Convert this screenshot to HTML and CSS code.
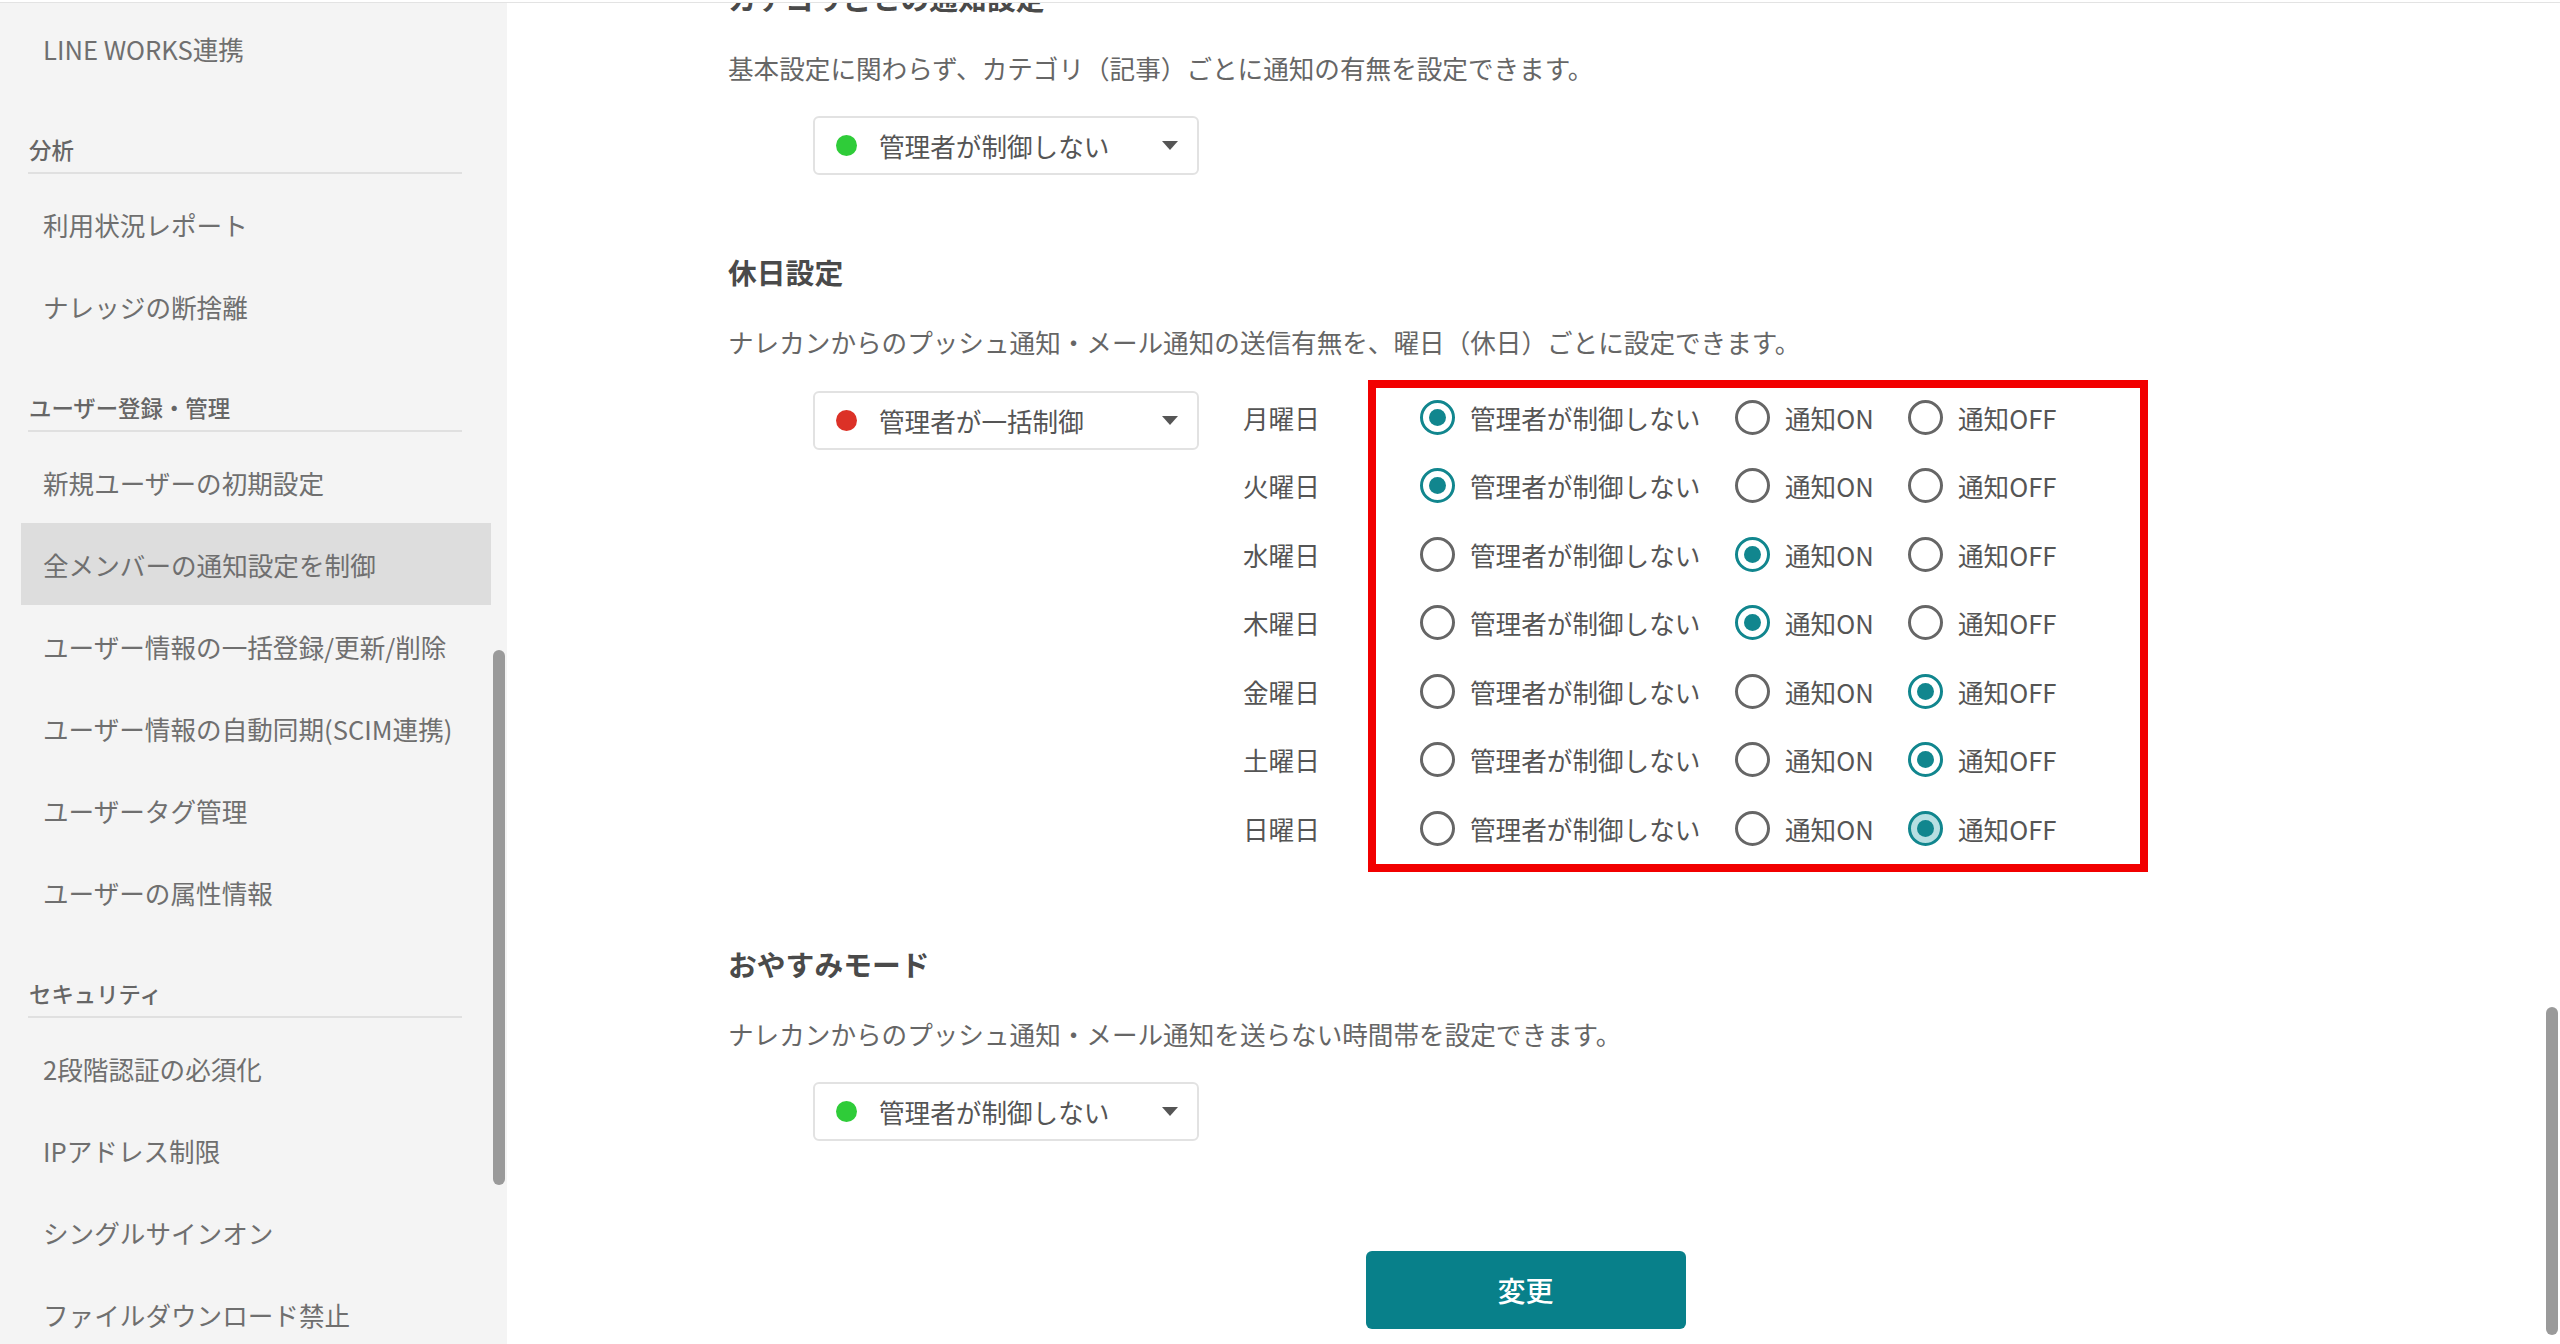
FILE: index.html
```html
<!DOCTYPE html>
<html lang="ja">
<head>
<meta charset="utf-8">
<title>通知設定</title>
<link rel="stylesheet" href="styles.css">
</head>
<body>
<div class="topbar"></div>
<div class="app">
  <aside class="sidebar">
    <div class="nav-item">LINE WORKS連携</div>
    <div class="nav-head">分析</div>
    <div class="nav-item">利用状況レポート</div>
    <div class="nav-item">ナレッジの断捨離</div>
    <div class="nav-head">ユーザー登録・管理</div>
    <div class="nav-item">新規ユーザーの初期設定</div>
    <div class="nav-item active">全メンバーの通知設定を制御</div>
    <div class="nav-item">ユーザー情報の一括登録/更新/削除</div>
    <div class="nav-item">ユーザー情報の自動同期(SCIM連携)</div>
    <div class="nav-item">ユーザータグ管理</div>
    <div class="nav-item">ユーザーの属性情報</div>
    <div class="nav-head">セキュリティ</div>
    <div class="nav-item">2段階認証の必須化</div>
    <div class="nav-item">IPアドレス制限</div>
    <div class="nav-item">シングルサインオン</div>
    <div class="nav-item">ファイルダウンロード禁止</div>
    <div class="side-thumb"></div>
  </aside>
  <main class="main">
    <div class="content">
      <section class="sec sec-first">
        <h2 class="sec-title">カテゴリごとの通知設定</h2>
        <p class="sec-desc">基本設定に関わらず、カテゴリ（記事）ごとに通知の有無を設定できます。</p>
        <div class="select select-solo"><span class="dot green"></span><span class="select-text">管理者が制御しない</span><span class="caret"></span></div>
      </section>

      <section class="sec sec-holiday">
        <h2 class="sec-title">休日設定</h2>
        <p class="sec-desc">ナレカンからのプッシュ通知・メール通知の送信有無を、曜日（休日）ごとに設定できます。</p>
        <div class="holiday-row">
          <div class="select select-inrow"><span class="dot red"></span><span class="select-text">管理者が一括制御</span><span class="caret"></span></div>
          <div class="days">
            <div class="day-labels">
              <div class="day-label">月曜日</div>
              <div class="day-label">火曜日</div>
              <div class="day-label">水曜日</div>
              <div class="day-label">木曜日</div>
              <div class="day-label">金曜日</div>
              <div class="day-label">土曜日</div>
              <div class="day-label">日曜日</div>
            </div>
            <div class="day-options">
              <div class="opt-row">
                <label class="opt opt-a"><span class="radio on"></span>管理者が制御しない</label>
                <label class="opt opt-b"><span class="radio"></span>通知ON</label>
                <label class="opt"><span class="radio"></span>通知OFF</label>
              </div>
              <div class="opt-row">
                <label class="opt opt-a"><span class="radio on"></span>管理者が制御しない</label>
                <label class="opt opt-b"><span class="radio"></span>通知ON</label>
                <label class="opt"><span class="radio"></span>通知OFF</label>
              </div>
              <div class="opt-row">
                <label class="opt opt-a"><span class="radio"></span>管理者が制御しない</label>
                <label class="opt opt-b"><span class="radio on"></span>通知ON</label>
                <label class="opt"><span class="radio"></span>通知OFF</label>
              </div>
              <div class="opt-row">
                <label class="opt opt-a"><span class="radio"></span>管理者が制御しない</label>
                <label class="opt opt-b"><span class="radio on"></span>通知ON</label>
                <label class="opt"><span class="radio"></span>通知OFF</label>
              </div>
              <div class="opt-row">
                <label class="opt opt-a"><span class="radio"></span>管理者が制御しない</label>
                <label class="opt opt-b"><span class="radio"></span>通知ON</label>
                <label class="opt"><span class="radio on"></span>通知OFF</label>
              </div>
              <div class="opt-row">
                <label class="opt opt-a"><span class="radio"></span>管理者が制御しない</label>
                <label class="opt opt-b"><span class="radio"></span>通知ON</label>
                <label class="opt"><span class="radio on"></span>通知OFF</label>
              </div>
              <div class="opt-row">
                <label class="opt opt-a"><span class="radio"></span>管理者が制御しない</label>
                <label class="opt opt-b"><span class="radio"></span>通知ON</label>
                <label class="opt"><span class="radio on focus"></span>通知OFF</label>
              </div>
            </div>
          </div>
        </div>
      </section>

      <section class="sec sec-sleep">
        <h2 class="sec-title">おやすみモード</h2>
        <p class="sec-desc">ナレカンからのプッシュ通知・メール通知を送らない時間帯を設定できます。</p>
        <div class="select select-solo"><span class="dot green"></span><span class="select-text">管理者が制御しない</span><span class="caret"></span></div>
      </section>

      <div class="actions"><button class="btn-primary">変更</button></div>
    </div>
    <div class="main-thumb"></div>
  </main>
</div>
</body>
</html>
```

FILE: styles.css
```css
*, *::before, *::after { box-sizing: border-box; }
html, body {
  margin: 0;
  padding: 0;
  width: 2560px;
  height: 1344px;
  overflow: hidden;
  background: #fff;
  font-family: "Noto Sans CJK JP", "Noto Sans", sans-serif;
  color: #555;
}
.topbar {
  height: 3px;
  background: #fff;
  border-bottom: 1px solid #e3e3e3;
}
.app {
  display: flex;
  height: 1341px;
}

/* Sidebar */
.sidebar {
  position: relative;
  width: 507px;
  flex: 0 0 507px;
  background: #f4f4f4;
  padding-top: 4px;
  overflow: hidden;
}
.nav-item {
  height: 82px;
  width: 470px;
  margin-left: 21px;
  padding-left: 22px;
  display: flex;
  align-items: center;
  font-size: 25.6px;
  color: #6f6f6f;
  white-space: nowrap;
}
.nav-item.active {
  background: #dddddd;
}
.nav-head {
  margin: 44px 0 9px 28px;
  width: 434px;
  padding: 0 0 7px 1px;
  line-height: 32px;
  font-size: 22.4px;
  font-weight: 500;
  color: #666;
  border-bottom: 2px solid #e0e0e0;
}
.side-thumb {
  position: absolute;
  left: 493px;
  top: 647px;
  width: 12px;
  height: 535px;
  border-radius: 6px;
  background: #9a9a9a;
}

/* Main */
.main {
  position: relative;
  flex: 1;
  overflow: hidden;
}
.main-thumb {
  position: absolute;
  right: 2px;
  top: 1004px;
  width: 12px;
  height: 328px;
  border-radius: 6px;
  background: #9a9a9a;
}
.content {
  width: 1600px;
  margin-left: 221px;
  margin-top: -25px;
}
.sec-title {
  margin: 0;
  height: 40px;
  line-height: 40px;
  font-size: 28.8px;
  font-weight: 700;
  color: #4a4a4a;
}
.sec-desc {
  margin: 31px 0 0 0;
  height: 38px;
  line-height: 38px;
  font-size: 25.6px;
  color: #666;
  white-space: nowrap;
}
.sec-holiday { margin-top: 77px; }
.sec-sleep { margin-top: 81px; }

.select {
  width: 386px;
  height: 59px;
  border: 2px solid #e2e2e2;
  border-radius: 6px;
  display: flex;
  align-items: center;
  padding-left: 21px;
  padding-right: 19px;
  background: #fff;
}
.select-solo { margin: 29px 0 0 85px; }
.select-inrow { margin: 8px 0 0 85px; flex: 0 0 386px; }
.dot {
  width: 21px;
  height: 21px;
  border-radius: 50%;
  flex: 0 0 21px;
  margin-right: 22px;
}
.dot.green { background: #2fcc39; }
.dot.red { background: #dc3127; }
.select-text {
  flex: 1;
  font-size: 25.6px;
  color: #555;
  white-space: nowrap;
}
.caret {
  width: 0;
  height: 0;
  border-left: 8px solid transparent;
  border-right: 8px solid transparent;
  border-top: 9px solid #555;
}

/* Holiday grid */
.holiday-row {
  display: flex;
  align-items: flex-start;
  margin-top: 22px;
}
.days {
  display: flex;
  margin-left: 44px;
}
.day-labels {
  width: 177px;
}
.day-label,
.opt-row {
  height: 68.5px;
  display: flex;
  align-items: center;
  font-size: 25.6px;
  color: #555;
  white-space: nowrap;
}
.day-options {
  position: relative;
  width: 728px;
}
.day-options::after {
  content: "";
  position: absolute;
  left: -52px;
  top: -3px;
  width: 780px;
  height: 492px;
  border: 8px solid #f20000;
  pointer-events: none;
}
.opt {
  display: flex;
  align-items: center;
  gap: 15px;
}
.opt-a { width: 315px; }
.opt-b { width: 173px; }
.radio {
  position: relative;
  width: 35px;
  height: 35px;
  flex: 0 0 35px;
  border-radius: 50%;
  border: 3.5px solid #666;
  background: #fff;
}
.radio.on {
  border-color: #11868e;
}
.radio.on::after {
  content: "";
  position: absolute;
  left: 50%;
  top: 50%;
  width: 17px;
  height: 17px;
  margin: -8.5px 0 0 -8.5px;
  border-radius: 50%;
  background: #11868e;
}
.radio.focus {
  background: #b7dfe2;
}

/* Button */
.actions {
  display: flex;
  justify-content: center;
  margin-top: 110px;
  padding-right: 5px;
}
.btn-primary {
  width: 320px;
  height: 78px;
  border: none;
  border-radius: 6px;
  background: #08808a;
  color: #fff;
  font-family: "Noto Sans CJK JP", "Noto Sans", sans-serif;
  font-size: 28px;
  font-weight: 500;
}
```
